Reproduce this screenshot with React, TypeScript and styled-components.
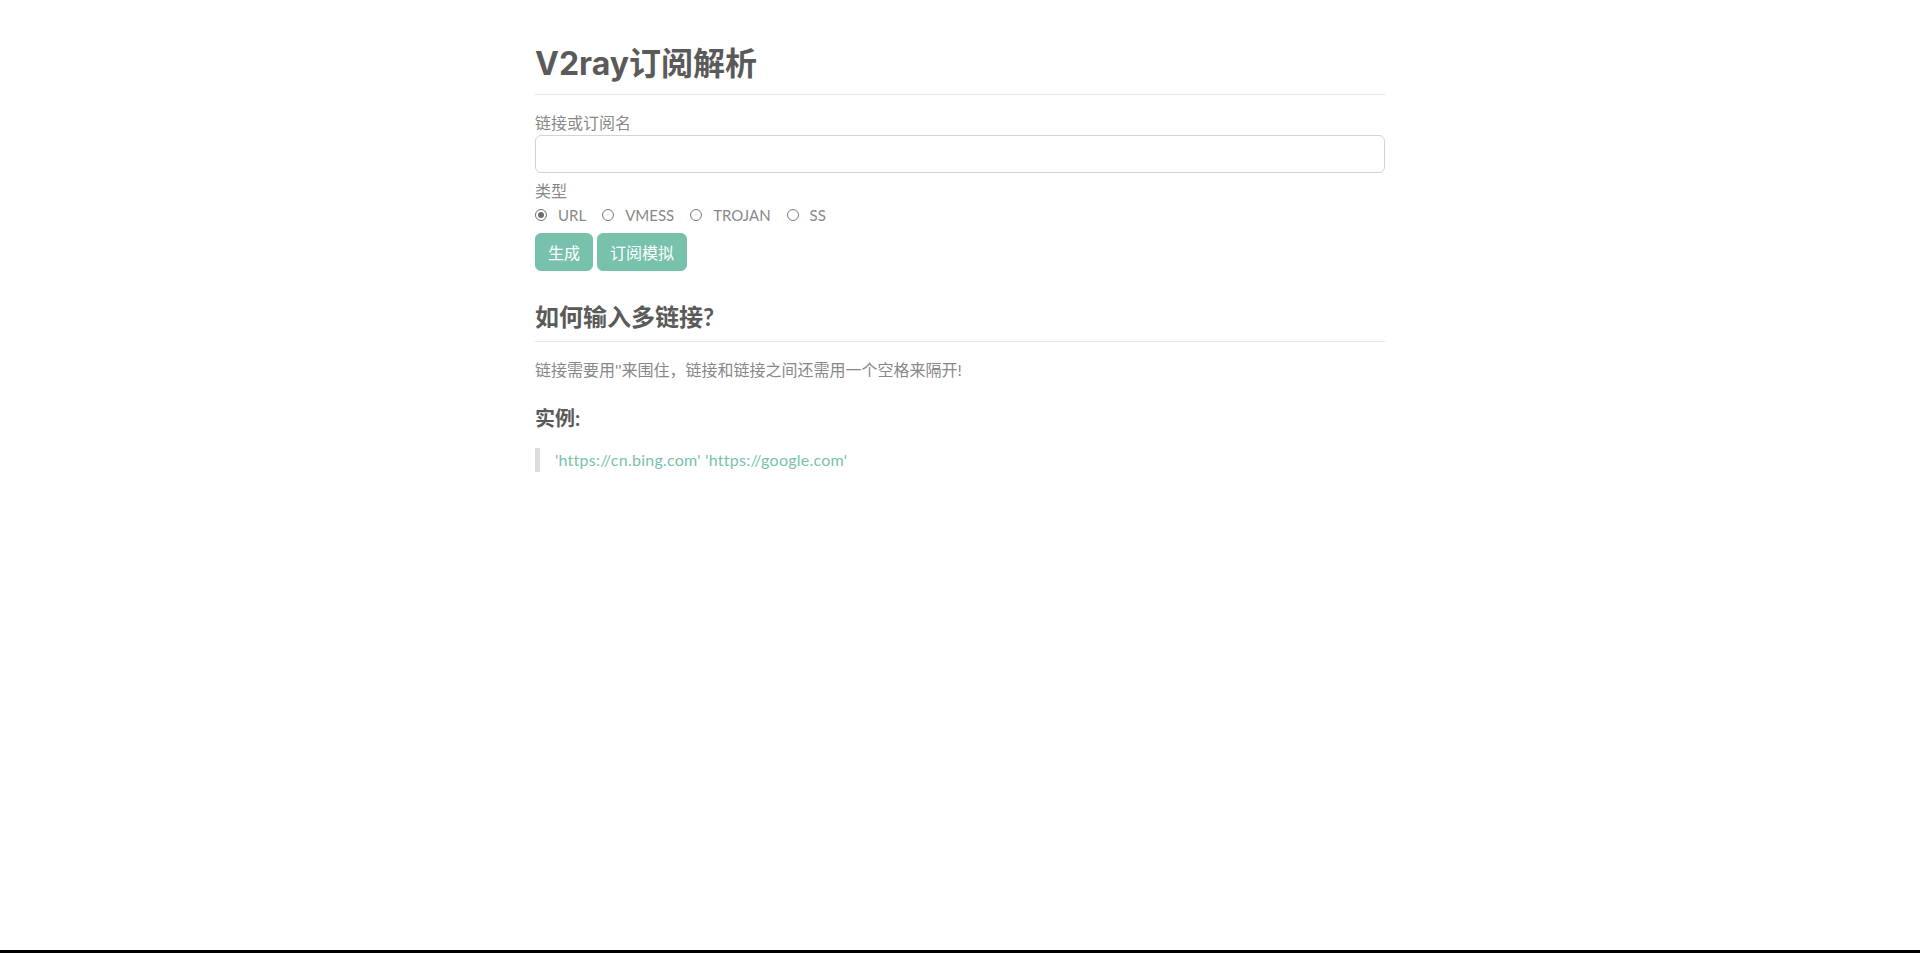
import { useState } from "react";
import { styled, createGlobalStyle } from "styled-components";

const GlobalStyle = createGlobalStyle`
	html, body {
		margin: 0;
		padding: 0;
		background: #ffffff;
	}
	body {
		font-family: "Segoe UI", "Lato", "Noto Sans CJK SC", sans-serif;
		font-size: 16px;
		color: #888888;
	}
	* {
		box-sizing: border-box;
	}
`;

const types = ["URL", "VMESS", "TROJAN", "SS"];

const App = () => {
	const [type, setType] = useState("URL");
	return (
		<Page>
			<GlobalStyle />
			<Container>
				<Title>V2ray订阅解析</Title>
				<Label htmlFor="link">链接或订阅名</Label>
				<Input id="link" type="text" />
				<Label>类型</Label>
				<RadioRow>
					{types.map((t) => (
						<RadioOption key={t} onClick={() => setType(t)}>
							<Circle $checked={type === t} />
							{t}
						</RadioOption>
					))}
				</RadioRow>
				<Buttons>
					<Button>生成</Button>
					<Button>订阅模拟</Button>
				</Buttons>
				<SectionTitle>如何输入多链接?</SectionTitle>
				<Paragraph>链接需要用''来围住，链接和链接之间还需用一个空格来隔开!</Paragraph>
				<SubTitle>实例:</SubTitle>
				<Quote>'https://cn.bing.com' 'https://google.com'</Quote>
			</Container>
			<BottomBar />
		</Page>
	);
};

export default App;

const Page = styled.div`
	min-height: 100vh;
	display: flex;
	flex-direction: column;
`;
const Container = styled.div`
	flex: 1;
	width: 850px;
	margin: 0 auto;
	display: flex;
	flex-direction: column;
	align-items: flex-start;
`;
const Title = styled.h1`
	align-self: stretch;
	margin: 45px 0 0;
	padding-bottom: 11px;
	font-family: "Inter", "Noto Sans CJK SC", sans-serif;
	font-size: 32px;
	line-height: 38px;
	font-weight: 700;
	color: #5a5a5a;
	border-bottom: 1px solid #e7e7e7;
`;
const Label = styled.label`
	display: block;
	margin-top: 16px;
	line-height: 24px;
	color: #888888;
	input + & {
		margin-top: 6px;
	}
`;
const Input = styled.input`
	align-self: stretch;
	height: 38px;
	border: 1px solid #d0d3d8;
	border-radius: 6px;
	background: #ffffff;
	padding: 6px 12px;
	font-size: 16px;
	outline: none;
`;
const RadioRow = styled.div`
	display: flex;
	align-items: center;
	gap: 16px;
	height: 24px;
`;
const RadioOption = styled.span`
	display: inline-flex;
	align-items: center;
	gap: 11px;
	cursor: pointer;
	color: #888888;
	font-size: 15px;
	line-height: 24px;
`;
const Circle = styled.span<{ $checked: boolean }>`
	width: 12px;
	height: 12px;
	border-radius: 50%;
	border: 1px solid ${(p) => (p.$checked ? "#6e6e6e" : "#7a7a7a")};
	background: #ffffff;
	display: inline-flex;
	align-items: center;
	justify-content: center;
	&::after {
		content: "";
		width: 6px;
		height: 6px;
		border-radius: 50%;
		background: ${(p) => (p.$checked ? "#6e6e6e" : "transparent")};
	}
`;
const Buttons = styled.div`
	display: flex;
	gap: 4px;
	margin-top: 6px;
`;
const Button = styled.button`
	height: 38px;
	padding: 0 12px;
	border: 1px solid #78c2ad;
	border-radius: 6px;
	background: #78c2ad;
	color: #ffffff;
	font-family: inherit;
	font-size: 16px;
	cursor: pointer;
`;
const SectionTitle = styled.h2`
	align-self: stretch;
	margin: 32px 0 0;
	padding-bottom: 10px;
	font-size: 24px;
	line-height: 28px;
	font-weight: 700;
	color: #5a5a5a;
	border-bottom: 1px solid #e7e7e7;
`;
const Paragraph = styled.p`
	margin: 16px 0 0;
	line-height: 24px;
`;
const SubTitle = styled.h3`
	margin: 24px 0 0;
	font-size: 20px;
	line-height: 24px;
	font-weight: 700;
	color: #5a5a5a;
`;
const Quote = styled.blockquote`
	margin: 18px 0 0;
	padding-left: 15px;
	border-left: 5px solid #dcdcdc;
	line-height: 24px;
	letter-spacing: 0.25px;
	color: #78c2ad;
`;
const BottomBar = styled.div`
	height: 3px;
	background: #000000;
`;
